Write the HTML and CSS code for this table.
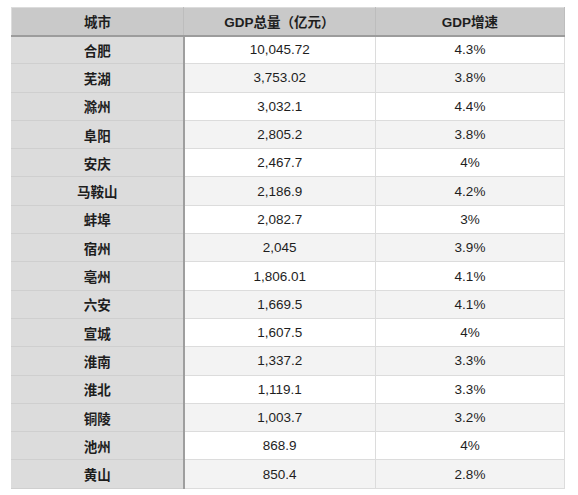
FILE: index.html
```html
<!DOCTYPE html>
<html lang="zh">
<head>
<meta charset="utf-8">
<link rel="stylesheet" href="styles.css">
</head>
<body>
<table class="gdp">
  <thead>
    <tr><th class="c1">城市</th><th class="c2">GDP总量（亿元）</th><th class="c3">GDP增速</th></tr>
  </thead>
  <tbody>
    <tr><td class="city">合肥</td><td>10,045.72</td><td>4.3%</td></tr>
    <tr><td class="city">芜湖</td><td>3,753.02</td><td>3.8%</td></tr>
    <tr><td class="city">滁州</td><td>3,032.1</td><td>4.4%</td></tr>
    <tr><td class="city">阜阳</td><td>2,805.2</td><td>3.8%</td></tr>
    <tr><td class="city">安庆</td><td>2,467.7</td><td>4%</td></tr>
    <tr><td class="city">马鞍山</td><td>2,186.9</td><td>4.2%</td></tr>
    <tr><td class="city">蚌埠</td><td>2,082.7</td><td>3%</td></tr>
    <tr><td class="city">宿州</td><td>2,045</td><td>3.9%</td></tr>
    <tr><td class="city">亳州</td><td>1,806.01</td><td>4.1%</td></tr>
    <tr><td class="city">六安</td><td>1,669.5</td><td>4.1%</td></tr>
    <tr><td class="city">宣城</td><td>1,607.5</td><td>4%</td></tr>
    <tr><td class="city">淮南</td><td>1,337.2</td><td>3.3%</td></tr>
    <tr><td class="city">淮北</td><td>1,119.1</td><td>3.3%</td></tr>
    <tr><td class="city">铜陵</td><td>1,003.7</td><td>3.2%</td></tr>
    <tr><td class="city">池州</td><td>868.9</td><td>4%</td></tr>
    <tr><td class="city">黄山</td><td>850.4</td><td>2.8%</td></tr>
  </tbody>
</table>
</body>
</html>
```
FILE: styles.css
```css
html, body {
  margin: 0;
  background: #ffffff;
}
body {
  padding: 7px 13px 0 11px;
  font-family: "Liberation Sans", "Noto Sans CJK SC", sans-serif;
  font-size: 13.5px;
  color: #1e1e1e;
}
.gdp {
  width: 554px;
  border-collapse: collapse;
  table-layout: fixed;
  border: 1px solid #d4d4d4;
}
.gdp th, .gdp td {
  text-align: center;
  vertical-align: middle;
  padding: 0;
  border: 1px solid #dcdcdc;
}
.gdp thead tr {
  height: 28px;
}
.gdp th {
  background: #c9c9c9;
  font-weight: bold;
  border-bottom: 2px solid #9c9c9c;
  border-right-color: #bdbdbd;
}
.gdp .c1 { width: 171px; }
.gdp .c2 { width: 191px; }
.gdp tbody tr {
  height: 28.3px;
  background: #ffffff;
}
.gdp tbody tr:nth-child(even) {
  background: #f3f3f3;
}
.gdp td.city {
  background: #dcdcdc;
  font-weight: bold;
  border-right: 2px solid #9e9e9e;
  border-bottom-color: #cfcfcf;
}
.gdp td:last-child {
  border-left-color: #cfcfcf;
}
```
